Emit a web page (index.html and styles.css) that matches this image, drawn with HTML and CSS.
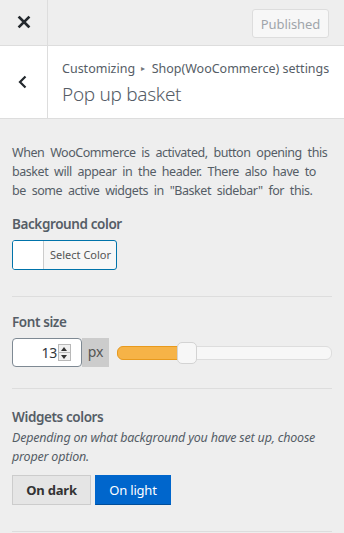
FILE: index.html
```html
<!DOCTYPE html>
<html lang="en">
<head>
  <meta charset="UTF-8">
  <meta name="viewport" content="width=device-width, initial-scale=1.0">
  <title>Pop up basket</title>
  <link rel="stylesheet" href="styles.css">
</head>
<body>
  <header class="top-bar">
    <button class="close-btn" aria-label="Close">
      <svg width="14" height="14" viewBox="0 0 14 14"><path d="M2.5 2.5l9 9M11.5 2.5l-9 9" stroke="#23282d" stroke-width="2.6" stroke-linecap="square"/></svg>
    </button>
    <div class="top-actions">
      <button class="published-btn" disabled>Published</button>
    </div>
  </header>
  <section class="section-head">
    <button class="back-btn" aria-label="Back">
      <svg width="12" height="16" viewBox="0 0 12 16"><path d="M8.5 2.5L3 8l5.5 5.5" fill="none" stroke="#23282d" stroke-width="2.2"/></svg>
    </button>
    <div class="section-title">
      <span class="crumb">Customizing <span class="crumb-sep">▸</span> Shop(WooCommerce) settings</span>
      <h2>Pop up basket</h2>
    </div>
  </section>
  <main class="controls">
    <p class="section-desc">When WooCommerce is activated, button opening this basket will appear in the header. There also have to be some active widgets in "Basket sidebar" for this.</p>

    <div class="control control-color">
      <span class="control-title">Background color</span>
      <button class="color-btn">
        <span class="color-swatch"></span>
        <span class="color-label">Select Color</span>
      </button>
    </div>

    <div class="control control-range">
      <span class="control-title">Font size</span>
      <div class="range-row">
        <div class="number-input">
          <span class="number-value">13</span>
          <span class="spinner">
            <span class="spin-up"></span>
            <span class="spin-down"></span>
          </span>
        </div>
        <span class="unit">px</span>
        <div class="slider">
          <div class="slider-fill" style="width: 32%"></div>
          <span class="slider-handle" style="left: 27.5%"></span>
        </div>
      </div>
    </div>

    <div class="control control-toggle">
      <span class="control-title">Widgets colors</span>
      <span class="control-desc">Depending on what background you have set up, choose proper option.</span>
      <div class="toggle-group">
        <button class="toggle">On dark</button>
        <button class="toggle active">On light</button>
      </div>
    </div>
  </main>
</body>
</html>
```

FILE: styles.css
```css
body {
  margin: 0;
  background-color: #eeeeee;
  color: #555d66;
  font-family: 'Noto Sans', sans-serif;
  font-size: 12.5px;
  letter-spacing: -0.2px;
  width: 344px;
  height: 533px;
  overflow: hidden;
}
button {
  font-family: inherit;
  letter-spacing: inherit;
}
.top-bar {
  display: flex;
  height: 45px;
  border-bottom: 1px solid #dddddd;
  background-color: #eeeeee;
}
.close-btn {
  width: 48px;
  border: none;
  border-right: 1px solid #dddddd;
  background: none;
  display: flex;
  align-items: center;
  justify-content: center;
  padding: 0 0 2px;
}
.top-actions {
  flex: 1;
  display: flex;
  justify-content: flex-end;
  align-items: center;
  padding-right: 15px;
}
.published-btn {
  width: 77px;
  height: 29px;
  margin-top: 2px;
  border: 1px solid #dddddd;
  border-radius: 3px;
  background-color: #f7f7f7;
  color: #a0a5aa;
  font-size: 13px;
  letter-spacing: -0.1px;
  padding: 0;
}
.section-head {
  display: flex;
  height: 72px;
  background-color: #ffffff;
  border-bottom: 1px solid #dddddd;
}
.back-btn {
  width: 48px;
  border: none;
  border-right: 1px solid #dddddd;
  background: none;
  display: flex;
  align-items: center;
  justify-content: center;
  padding: 0 2px 0 0;
}
.section-title {
  padding: 13px 0 0 14px;
  display: flex;
  flex-direction: column;
}
.crumb {
  font-size: 12.5px;
  letter-spacing: 0;
  line-height: 18px;
  color: #555d66;
  white-space: nowrap;
}
.crumb-sep {
  font-size: 8px;
  color: #72777c;
  vertical-align: 2px;
  margin: 0 3px;
}
.section-title h2 {
  margin: 3px 0 0;
  font-size: 19px;
  font-weight: 300;
  letter-spacing: -0.3px;
  line-height: 26px;
  color: #555d66;
}
.controls {
  padding: 0 12px;
}
.section-desc {
  margin: 24px 1px 0 0;
  line-height: 19px;
  letter-spacing: -0.45px;
  word-spacing: 3px;
  color: #555d66;
}
.control {
  display: flex;
  flex-direction: column;
  align-items: flex-start;
  border-bottom: 1px solid #dddddd;
}
.control-color {
  padding: 14px 0 26px;
}
.control-range {
  padding: 15px 0 21px;
}
.control-toggle {
  padding: 18px 0 26px;
}
.control-title {
  font-size: 13.5px;
  font-weight: 600;
  letter-spacing: -0.4px;
  line-height: 20px;
  margin-bottom: 6px;
}
.color-btn {
  display: flex;
  height: 30px;
  padding: 0;
  border: 1px solid #0073aa;
  border-radius: 3px;
  background-color: #f7f7f7;
  overflow: hidden;
}
.color-swatch {
  width: 30px;
  height: 100%;
  background-color: #ffffff;
  border-right: 1px solid #cccccc;
}
.color-label {
  padding: 0 5px 0 6px;
  line-height: 28px;
  font-size: 11px;
  letter-spacing: 0;
  color: #555555;
}
.range-row {
  display: flex;
  align-items: center;
  width: 100%;
}
.number-input {
  display: flex;
  align-items: center;
  justify-content: flex-end;
  width: 68px;
  height: 27px;
  background-color: #ffffff;
  border: 1px solid #7e8993;
  border-radius: 4px;
  box-sizing: content-box;
}
.number-value {
  font-size: 14px;
  color: #32373c;
}
.spinner {
  display: flex;
  flex-direction: column;
  width: 13px;
  height: 17px;
  margin: 0 10px 0 1px;
  border: 1px solid #b8b8b8;
  box-sizing: border-box;
  background-color: #f0f0f0;
}
.spin-up,
.spin-down {
  flex: 1;
  position: relative;
}
.spin-down {
  border-top: 1px solid #b8b8b8;
}
.spin-up::after,
.spin-down::after {
  content: "";
  position: absolute;
  left: 2px;
  top: 2px;
  border-left: 3px solid transparent;
  border-right: 3px solid transparent;
}
.spin-up::after {
  border-bottom: 4px solid #333333;
}
.spin-down::after {
  top: 2px;
  border-top: 4px solid #333333;
}
.unit {
  width: 27px;
  height: 29px;
  line-height: 28px;
  background-color: #cccccc;
  text-align: center;
  font-size: 14px;
  color: #555555;
}
.slider {
  flex: 1;
  position: relative;
  height: 12px;
  margin-left: 8px;
  background-color: #f7f7f7;
  border: 1px solid #dddddd;
  border-radius: 6px;
}
.slider-fill {
  height: 100%;
  background-color: #f6b347;
  border: 1px solid #e89a1d;
  border-radius: 6px 0 0 6px;
  margin: -1px;
  box-sizing: content-box;
}
.slider-handle {
  position: absolute;
  top: -5px;
  width: 18px;
  height: 20px;
  background-color: #f7f7f7;
  border: 1px solid #d3d3d3;
  border-radius: 5px;
}
.control-desc {
  font-size: 12.5px;
  font-style: italic;
  letter-spacing: -0.2px;
  line-height: 19px;
  margin: -5px 0 9px;
}
.toggle-group {
  display: flex;
  gap: 4px;
}
.toggle {
  height: 30px;
  width: 79px;
  padding: 0;
  border: 1px solid #cccccc;
  background-color: #e5e5e5;
  color: #333333;
  font-size: 13px;
  font-weight: 700;
}
.toggle.active {
  width: 76px;
  background-color: #0066cc;
  border-color: #0066cc;
  border-bottom-color: #004d99;
  color: #ffffff;
  font-weight: 400;
}
```
